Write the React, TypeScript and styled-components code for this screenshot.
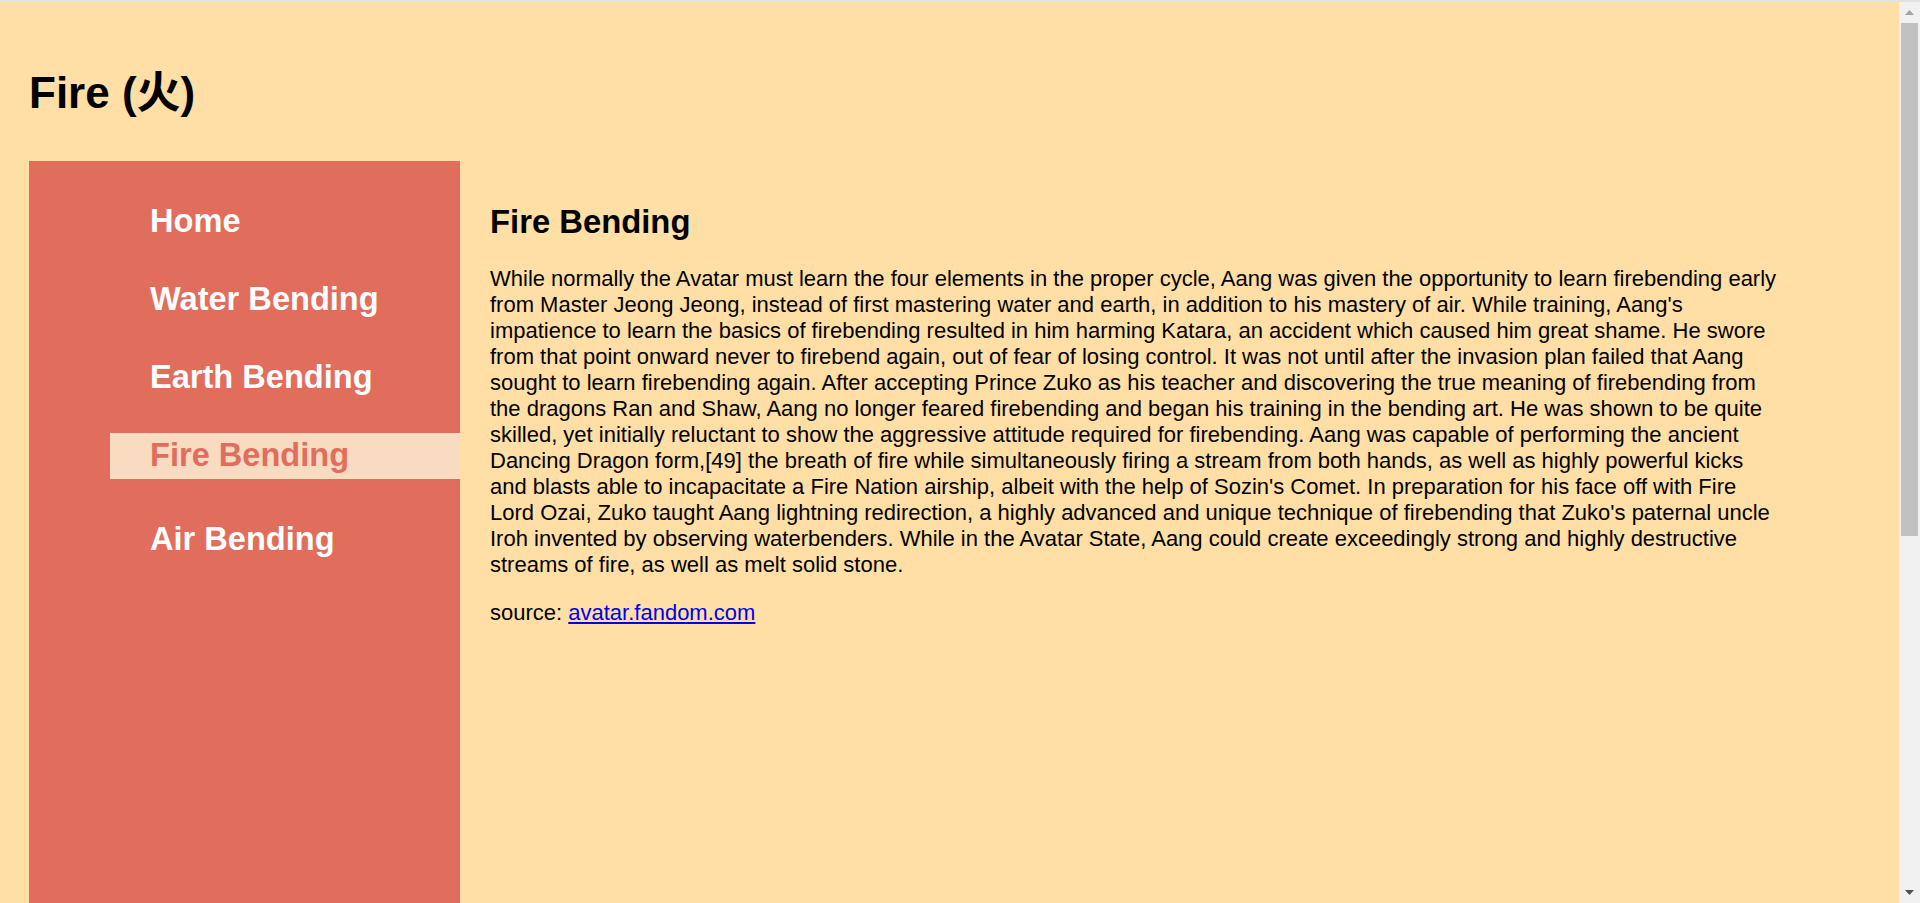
import styled, { createGlobalStyle } from "styled-components";

const GlobalStyle = createGlobalStyle`
    html {
        background-color: #ffdfa5;
    }

    body {
        margin: 0;
        border-top: 2px solid #e1e1e1;
        background-color: #ffdfa5;
        font-family: "Liberation Sans", Arial, sans-serif;
        color: #000;
    }
`

const Page = styled.div`
    padding: 66px 21px 20px 29px;
`

const Title = styled.h1`
    margin: 0 0 44px 0;
    font-size: 44px;
    line-height: 49px;
    font-weight: bold;
    font-family: "Liberation Sans", "Noto Sans CJK SC", sans-serif;
`

const Layout = styled.div`
    display: grid;
    grid-template-columns: 431px 1fr;
    align-items: start;
`

const Sidebar = styled.nav`
    background-color: #e16d5d;
    height: 1330px;
    padding-top: 38px;
    box-sizing: border-box;
`

const NavList = styled.ul`
    list-style: none;
    margin: 0;
    padding: 0 0 0 81px;
    display: flex;
    flex-direction: column;
    gap: 32px;
`

const NavItem = styled.li<{ $active?: boolean }>`
    margin-bottom: ${props => props.$active ? "6px" : "0"};
`

const NavLink = styled.a<{ $active?: boolean }>`
    display: block;
    padding: 3px 0 6px 40px;
    font-size: 32.6px;
    line-height: 37px;
    font-weight: bold;
    text-decoration: none;
    color: ${props => props.$active ? "#e16d5d" : "#ffffff"};
    background-color: ${props => props.$active ? "#f9dbc2" : "transparent"};
`

const Content = styled.main`
    padding: 15px 0 0 30px;
`

const Heading = styled.h2`
    margin: 26.6px 0;
    font-size: 32.8px;
    line-height: 37px;
    font-weight: bold;
`

const Text = styled.p`
    max-width: 1292px;
    margin: 22px 0;
    font-size: 22px;
    line-height: 26px;
`

const Source = styled.a`
    color: #0000ee;
    text-decoration: underline;
`

/* stand-in for the browser's classic scrollbar seen in the screenshot */
const ScrollBar = styled.div`
    position: fixed;
    top: 2px;
    right: 0;
    bottom: 0;
    width: 21px;
    background-color: #f1f1f1;
    display: flex;
    flex-direction: column;
    align-items: center;
`

const ScrollArrow = styled.div`
    height: 21px;
    width: 100%;
    display: flex;
    align-items: center;
    justify-content: center;
`

const ScrollTrack = styled.div`
    flex: 1;
    width: 100%;
    padding: 0 2px;
    box-sizing: border-box;
`

const ScrollThumb = styled.div`
    height: 513px;
    background-color: #c1c1c1;
`

const links = ["Home", "Water Bending", "Earth Bending", "Fire Bending", "Air Bending"]

function App() {
    const active = "Fire Bending"

    return (
        <>
            <GlobalStyle />
            <Page>
                <Title>Fire (火)</Title>
                <Layout>
                    <Sidebar>
                        <NavList>
                            {links.map(link => (
                                <NavItem key={link} $active={link === active}>
                                    <NavLink href="#" $active={link === active}>{link}</NavLink>
                                </NavItem>
                            ))}
                        </NavList>
                    </Sidebar>
                    <Content>
                        <Heading>Fire Bending</Heading>
                        <Text>
                            While normally the Avatar must learn the four elements in the proper cycle, Aang was given the opportunity to learn firebending early from Master Jeong Jeong, instead of first mastering water and earth, in addition to his mastery of air. While training, Aang's impatience to learn the basics of firebending resulted in him harming Katara, an accident which caused him great shame. He swore from that point onward never to firebend again, out of fear of losing control. It was not until after the invasion plan failed that Aang sought to learn firebending again. After accepting Prince Zuko as his teacher and discovering the true meaning of firebending from the dragons Ran and Shaw, Aang no longer feared firebending and began his training in the bending art. He was shown to be quite skilled, yet initially reluctant to show the aggressive attitude required for firebending. Aang was capable of performing the ancient Dancing Dragon form,[49] the breath of fire while simultaneously firing a stream from both hands, as well as highly powerful kicks and blasts able to incapacitate a Fire Nation airship, albeit with the help of Sozin's Comet. In preparation for his face off with Fire Lord Ozai, Zuko taught Aang lightning redirection, a highly advanced and unique technique of firebending that Zuko's paternal uncle Iroh invented by observing waterbenders. While in the Avatar State, Aang could create exceedingly strong and highly destructive streams of fire, as well as melt solid stone.
                        </Text>
                        <Text>
                            source: <Source href="#">avatar.fandom.com</Source>
                        </Text>
                    </Content>
                </Layout>
            </Page>
            <ScrollBar>
                <ScrollArrow>
                    <svg width="9" height="5" viewBox="0 0 9 5">
                        <path d="M0 5 L4.5 0 L9 5 Z" fill="#a3a3a3" />
                    </svg>
                </ScrollArrow>
                <ScrollTrack>
                    <ScrollThumb />
                </ScrollTrack>
                <ScrollArrow>
                    <svg width="9" height="5" viewBox="0 0 9 5">
                        <path d="M0 0 L9 0 L4.5 5 Z" fill="#505050" />
                    </svg>
                </ScrollArrow>
            </ScrollBar>
        </>
    )
}

export default App;
